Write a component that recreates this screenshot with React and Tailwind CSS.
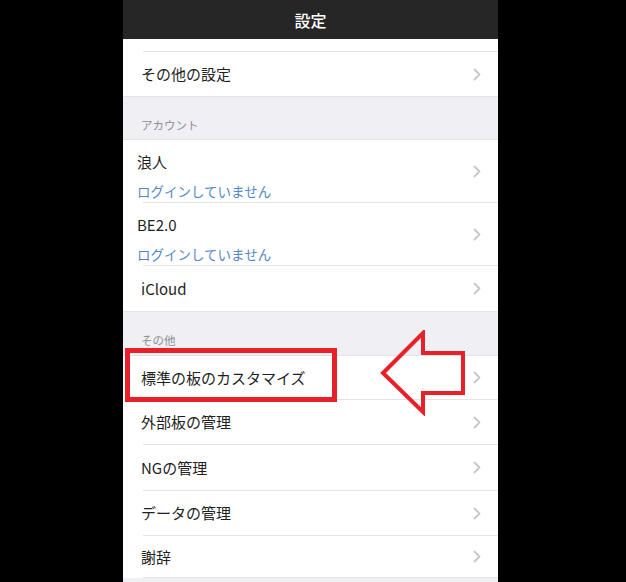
import React from "react";

const font = { fontFamily: '"Noto Sans CJK JP", "Noto Sans", sans-serif' };

function Chevron() {
  return (
    <svg width="8" height="13" viewBox="0 0 8 13" className="shrink-0">
      <polyline points="1.5,1.5 6.5,6.5 1.5,11.5" fill="none" stroke="#c7c7cc" strokeWidth="1.8" strokeLinecap="round" strokeLinejoin="round" />
    </svg>
  );
}

function Sep() {
  return <div className="ml-[20px] h-px bg-[#e3e3e6]" />;
}

function Row({ label, h = "h-[45px]", last }) {
  return (
    <>
      <div className={`${h} flex items-center pl-[18px] pr-[17px]`}>
        <span className="flex-1 text-[15px] leading-[18px] text-[#1f1f1f]">{label}</span>
        <Chevron />
      </div>
      {!last && <Sep />}
    </>
  );
}

function AccountRow({ name, h }) {
  return (
    <>
      <div className={`${h} flex items-center pl-[14px] pr-[17px]`}>
        <div className="flex-1 flex flex-col pt-[10px]">
          <span className="text-[15px] leading-[18px] text-[#1f1f1f]">{name}</span>
          <span className="mt-[12px] text-[13.5px] leading-[16px] text-[#5288c9]">ログインしていません</span>
        </div>
        <Chevron />
      </div>
      <Sep />
    </>
  );
}

function SectionHeader({ label, h, pb }) {
  return (
    <div className={`${h} ${pb} flex items-end pl-[18px] bg-[#efeff4] border-t border-b border-[#e3e3e6]`}>
      <span className="text-[11.5px] leading-[13px] text-[#8e8e93]">{label}</span>
    </div>
  );
}

export default function App() {
  return (
    <div className="w-[626px] h-[582px] bg-black flex pl-[123px] overflow-hidden relative" style={font}>
      <div className="w-[375px] h-[582px] bg-[#efeff4] flex flex-col">
        <div className="h-[39px] shrink-0 bg-[#262626] flex items-center justify-center">
          <span className="text-white text-[16px] font-medium leading-none">設定</span>
        </div>
        <div className="bg-white">
          <div className="h-[12px]" />
          <Sep />
          <Row label="その他の設定" h="h-[44px]" last />
        </div>
        <SectionHeader label="アカウント" h="h-[44px]" pb="pb-[7px]" />
        <div className="bg-white">
          <AccountRow name="浪人" h="h-[62px]" />
          <AccountRow name="BE2.0" h="h-[62px]" />
          <div className="h-[45px] flex items-center pl-[18px] pr-[17px]">
            <span className="flex-1 text-[15px] leading-[18px] text-[#1f1f1f]">iCloud</span>
            <Chevron />
          </div>
        </div>
        <SectionHeader label="その他" h="h-[45px]" pb="pb-[8px]" />
        <div className="bg-white">
          <Row label="標準の板のカスタマイズ" h="h-[43px]" />
          <Row label="外部板の管理" h="h-[44px]" />
          <Row label="NGの管理" h="h-[45px]" />
          <Row label="データの管理" h="h-[44px]" />
          <Row label="謝辞" h="h-[41px]" />
        </div>
      </div>

      <div className="absolute left-[125px] top-[348px] w-[212px] h-[54px] border-[5px] border-[#e8202a]" />
      <svg className="absolute left-[380px] top-[330px]" width="88" height="86" viewBox="380 330 88 86">
        <polygon
          points="383,373 423,333 423,353 463,353 463,393 423,393 423,412"
          fill="none"
          stroke="#e8202a"
          strokeWidth="4"
          strokeLinejoin="miter"
        />
      </svg>
    </div>
  );
}
